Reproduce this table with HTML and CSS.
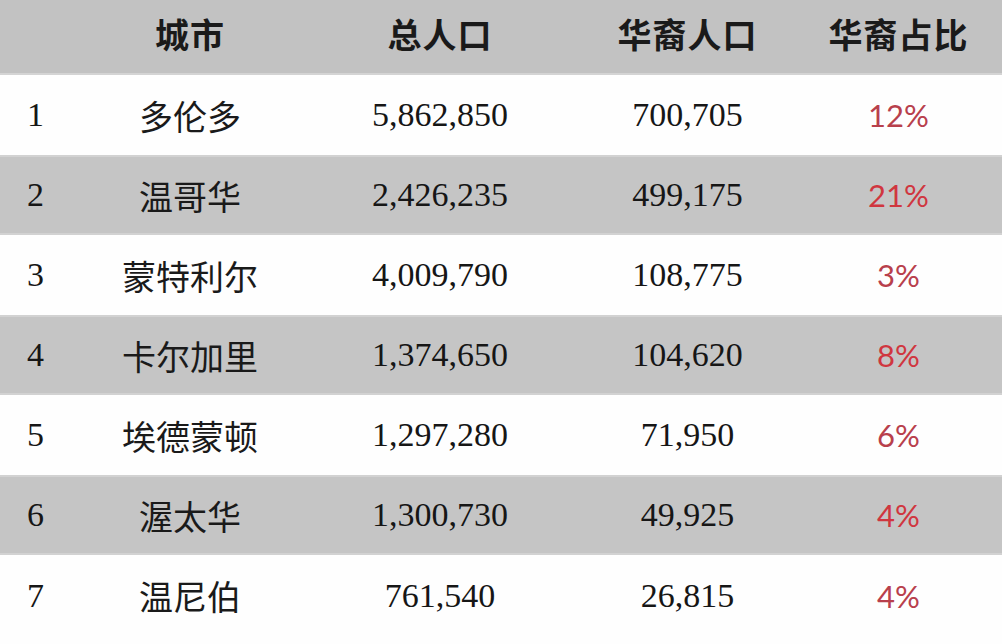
FILE: index.html
```html
<!DOCTYPE html>
<html lang="zh">
<head>
<meta charset="utf-8">
<link rel="stylesheet" href="styles.css">
</head>
<body>
<div class="table">
  <div class="row head">
    <div class="c0"></div>
    <div class="c1">城市</div>
    <div class="c2">总人口</div>
    <div class="c3">华裔人口</div>
    <div class="c4">华裔占比</div>
  </div>
  <div class="row odd">
    <div class="c0 num">1</div><div class="c1 city">多伦多</div><div class="c2 num">5,862,850</div><div class="c3 num">700,705</div><div class="c4 pct">12%</div>
  </div>
  <div class="row even">
    <div class="c0 num">2</div><div class="c1 city">温哥华</div><div class="c2 num">2,426,235</div><div class="c3 num">499,175</div><div class="c4 pct">21%</div>
  </div>
  <div class="row odd">
    <div class="c0 num">3</div><div class="c1 city">蒙特利尔</div><div class="c2 num">4,009,790</div><div class="c3 num">108,775</div><div class="c4 pct">3%</div>
  </div>
  <div class="row even">
    <div class="c0 num">4</div><div class="c1 city">卡尔加里</div><div class="c2 num">1,374,650</div><div class="c3 num">104,620</div><div class="c4 pct">8%</div>
  </div>
  <div class="row odd">
    <div class="c0 num">5</div><div class="c1 city">埃德蒙顿</div><div class="c2 num">1,297,280</div><div class="c3 num">71,950</div><div class="c4 pct">6%</div>
  </div>
  <div class="row even">
    <div class="c0 num">6</div><div class="c1 city">渥太华</div><div class="c2 num">1,300,730</div><div class="c3 num">49,925</div><div class="c4 pct">4%</div>
  </div>
  <div class="row odd last">
    <div class="c0 num">7</div><div class="c1 city">温尼伯</div><div class="c2 num">761,540</div><div class="c3 num">26,815</div><div class="c4 pct">4%</div>
  </div>
</div>
</body>
</html>
```

FILE: styles.css
```css
html, body {
  margin: 0;
  padding: 0;
  background: #ffffff;
}
.table {
  width: 1002px;
  height: 644px;
  overflow: hidden;
  display: flex;
  flex-direction: column;
}
.row {
  display: grid;
  grid-template-columns: 80px 220px 280px 215px 207px;
  align-items: center;
  height: 80px;
  flex: none;
}
.row > div {
  text-align: center;
  white-space: nowrap;
}
.row > .c0 {
  text-align: left;
  padding-left: 27px;
}
.head {
  height: 75px;
  background: #c2c2c2;
  font-family: "Noto Sans CJK SC", sans-serif;
  font-weight: 700;
  font-size: 34px;
  color: #1a1a1a;
  letter-spacing: 1px;
  border-bottom: 2px solid #d4d4d4;
  box-sizing: border-box;
}
.head > div {
  padding-bottom: 6px;
}
.odd {
  background: #fefefe;
}
.even {
  background: #c5c5c5;
  border-top: 2px solid #d2d2d2;
  border-bottom: 2px solid #d2d2d2;
  box-sizing: border-box;
}
.last {
  height: 89px;
  padding-bottom: 8px;
  box-sizing: border-box;
}
.num {
  font-family: "Liberation Serif", "Times New Roman", serif;
  font-size: 34px;
  color: #161616;
}
.city {
  font-family: "Noto Sans CJK SC", sans-serif;
  font-weight: 400;
  font-size: 34px;
  color: #1a1a1a;
}
.pct {
  font-family: "Lato", "Open Sans", sans-serif;
  font-weight: 400;
  font-size: 31px;
  color: #b8404c;
}
.even .pct {
  color: #d0363f;
}
```
